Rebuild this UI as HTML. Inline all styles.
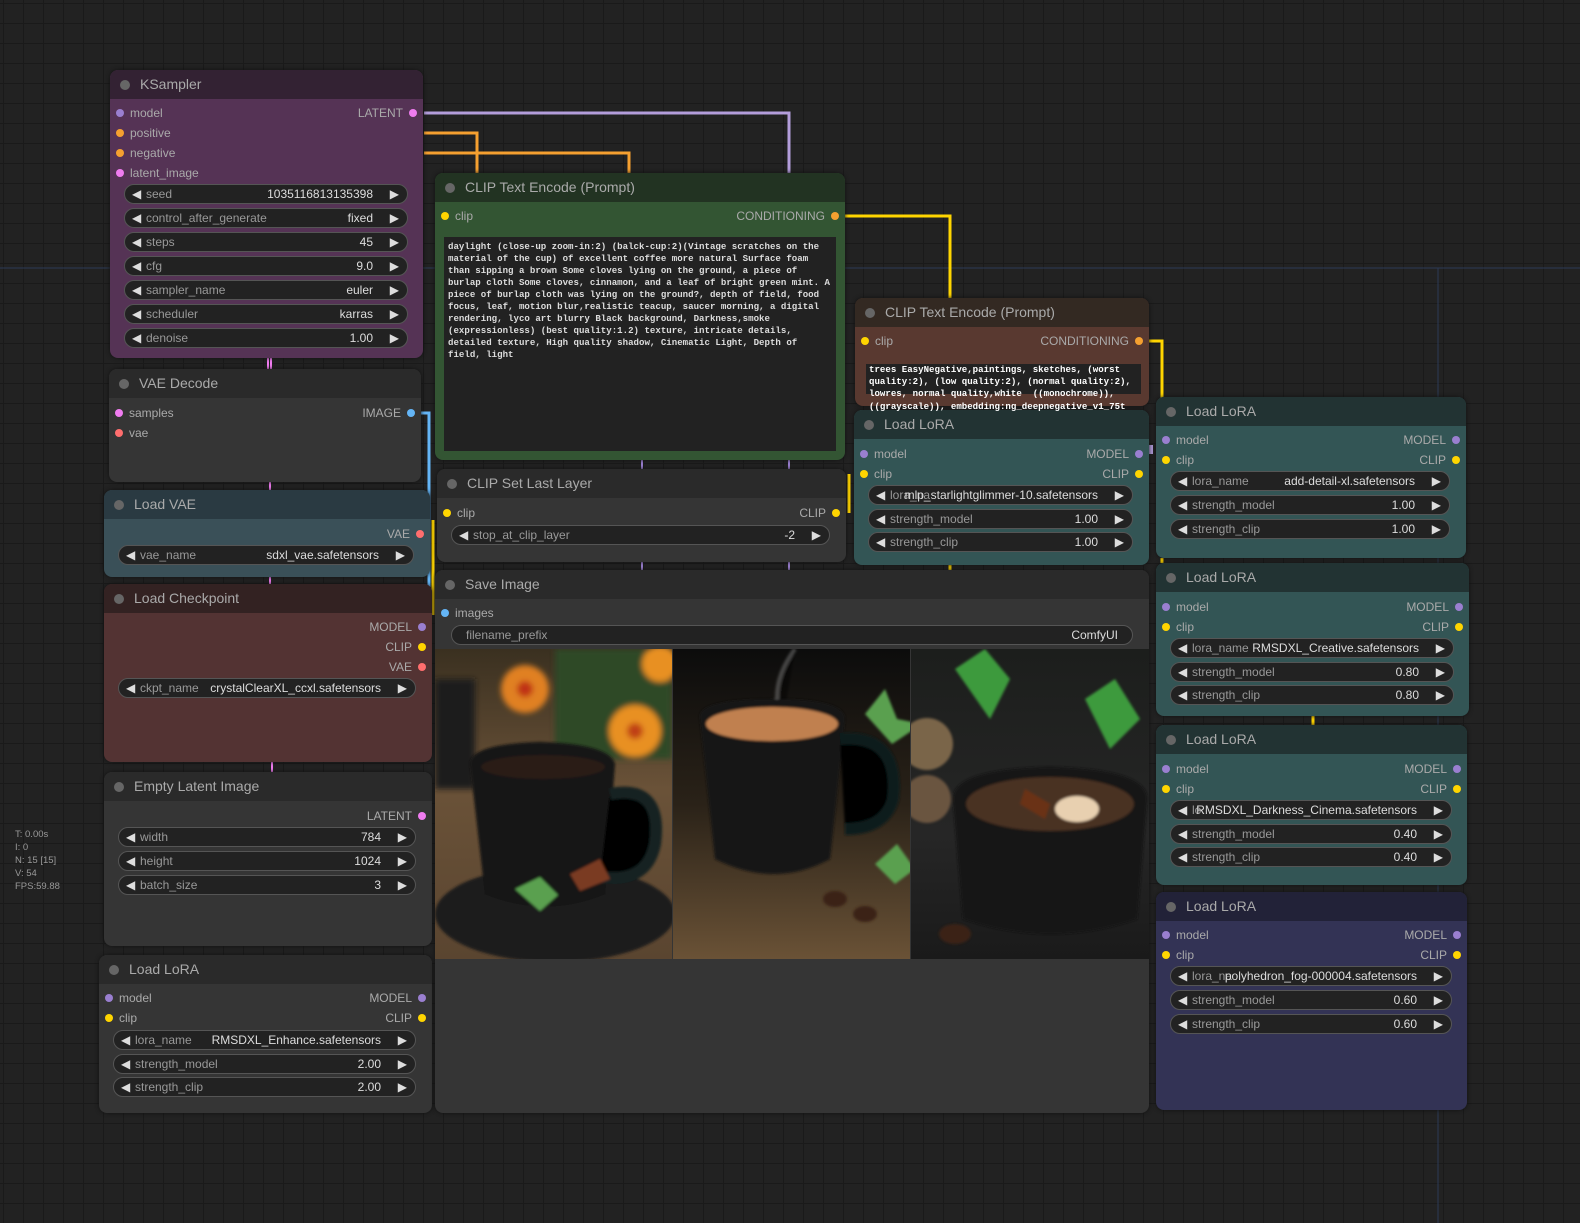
<!DOCTYPE html><html><head><meta charset="utf-8"><style>
*{box-sizing:border-box;margin:0;padding:0}
body{width:1580px;height:1223px;background:#222;position:relative;overflow:hidden;font-family:"Liberation Sans",sans-serif;font-size:12px;color:#aaa;
background-image:linear-gradient(#1a1a1a 1px,transparent 1px),linear-gradient(90deg,#1a1a1a 1px,transparent 1px);background-size:20px 20px;background-position:3px 3px}
.n{position:absolute;border-radius:8px;overflow:hidden;box-shadow:0 0 4px #111}
.t{position:absolute;left:0;right:0;top:0;height:29px;font-size:14px;color:#aaa;line-height:29px;padding-left:30px}
.t:before{content:"";position:absolute;left:10px;top:10px;width:10px;height:10px;border-radius:5px;background:#666}
.r{position:absolute;left:0;right:0;height:16px;line-height:16px}
.r .l{position:absolute;left:20px}.r .o{position:absolute;right:20px}
.d{position:absolute;width:8px;height:8px;border-radius:4px;top:4px}
.di{left:6px}.do{right:6px}
.w{position:absolute;height:20px;border-radius:10px;background:#222;border:1px solid #555;line-height:18px;color:#999}
.w:before{content:"◀";position:absolute;left:7px;color:#ddd;font-size:12px}
.w:after{content:"▶";position:absolute;right:8px;color:#ddd;font-size:12px}
.w.na:before,.w.na:after{content:none}
.w .k{position:absolute;left:21px}.w .v{position:absolute;right:34px;color:#ddd}
.pu{background:#9a7fd0}.or{background:#f5a030}.pk{background:#f07cf0}.ye{background:#ffd500}.bl{background:#64b5f6}.rd{background:#ff6e6e}
.ta{position:absolute;background:#222;font-family:"Liberation Mono",monospace;font-weight:bold;font-size:9.1px;line-height:12px;color:#ddd;padding:3px 4px;white-space:pre}
.st{position:absolute;left:15px;top:828px;font-size:9.5px;line-height:13px;color:#999}
</style></head><body>
<svg width="1580" height="1223" style="position:absolute;left:0;top:0" fill="none">
<path d="M0 268H1580" stroke="#2c3a55" stroke-width="1"/>
<path d="M1438 268V1223" stroke="#2c3a55" stroke-width="1"/>
<path d="M424 113H789V175" stroke="#b39ddb" stroke-width="3"/>
<path d="M424 133H477V175" stroke="#f5a030" stroke-width="3"/>
<path d="M424 153H629V175" stroke="#f5a030" stroke-width="3"/>
<path d="M845 216H950V300" stroke="#ffd500" stroke-width="3"/>
<path d="M1149 341H1162V400" stroke="#ffd500" stroke-width="3"/>
<path d="M421 413H429V615" stroke="#64b5f6" stroke-width="3"/>
<path d="M433 520V615" stroke="#ffd500" stroke-width="3"/>
<path d="M849 474V513" stroke="#ffd500" stroke-width="3"/>
<path d="M1151 454V445" stroke="#b39ddb" stroke-width="4"/>
<path d="M268 358V370M271 358V370" stroke="#f07cf0" stroke-width="2"/>
<path d="M270 480V490M270 577V584M272 762V772" stroke="#f07cf0" stroke-width="2"/>
<path d="M642 460V470M789 460V470M642 562V570M789 562V570" stroke="#9a7fd0" stroke-width="2"/>
<path d="M950 565V572M1313 716V725M1162 558V563" stroke="#ffd500" stroke-width="3"/>
</svg>

<div class="n" style="left:110px;top:70px;width:313px;height:288px;background:#553355">
<div class="t" style="background:#332233">KSampler</div>
<div class="r" style="top:35px"><span class="d di pu"></span><span class="l">model</span><span class="o">LATENT</span><span class="d do pk"></span></div>
<div class="r" style="top:55px"><span class="d di or"></span><span class="l">positive</span></div>
<div class="r" style="top:75px"><span class="d di or"></span><span class="l">negative</span></div>
<div class="r" style="top:95px"><span class="d di pk"></span><span class="l">latent_image</span></div>
<div class="w" style="left:14px;width:284px;top:114px"><span class="k">seed</span><span class="v">1035116813135398</span></div>
<div class="w" style="left:14px;width:284px;top:138px"><span class="k">control_after_generate</span><span class="v">fixed</span></div>
<div class="w" style="left:14px;width:284px;top:162px"><span class="k">steps</span><span class="v">45</span></div>
<div class="w" style="left:14px;width:284px;top:186px"><span class="k">cfg</span><span class="v">9.0</span></div>
<div class="w" style="left:14px;width:284px;top:210px"><span class="k">sampler_name</span><span class="v">euler</span></div>
<div class="w" style="left:14px;width:284px;top:234px"><span class="k">scheduler</span><span class="v">karras</span></div>
<div class="w" style="left:14px;width:284px;top:258px"><span class="k">denoise</span><span class="v">1.00</span></div>
</div>

<div class="n" style="left:109px;top:369px;width:312px;height:113px;background:#353535">
<div class="t" style="background:#2a2a2a">VAE Decode</div>
<div class="r" style="top:36px"><span class="d di pk"></span><span class="l">samples</span><span class="o">IMAGE</span><span class="d do bl"></span></div>
<div class="r" style="top:56px"><span class="d di rd"></span><span class="l">vae</span></div>
</div>

<div class="n" style="left:104px;top:490px;width:326px;height:87px;background:#3a5058">
<div class="t" style="background:#2a3a42">Load VAE</div>
<div class="r" style="top:36px"><span class="o">VAE</span><span class="d do rd"></span></div>
<div class="w" style="left:14px;width:296px;top:55px"><span class="k">vae_name</span><span class="v">sdxl_vae.safetensors</span></div>
</div>

<div class="n" style="left:104px;top:584px;width:328px;height:178px;background:#533333">
<div class="t" style="background:#332222">Load Checkpoint</div>
<div class="r" style="top:35px"><span class="o">MODEL</span><span class="d do pu"></span></div>
<div class="r" style="top:55px"><span class="o">CLIP</span><span class="d do ye"></span></div>
<div class="r" style="top:75px"><span class="o">VAE</span><span class="d do rd"></span></div>
<div class="w" style="left:14px;width:298px;top:94px"><span class="k">ckpt_name</span><span class="v">crystalClearXL_ccxl.safetensors</span></div>
</div>

<div class="n" style="left:104px;top:772px;width:328px;height:174px;background:#353535">
<div class="t" style="background:#2a2a2a">Empty Latent Image</div>
<div class="r" style="top:36px"><span class="o">LATENT</span><span class="d do pk"></span></div>
<div class="w" style="left:14px;width:298px;top:55px"><span class="k">width</span><span class="v">784</span></div>
<div class="w" style="left:14px;width:298px;top:79px"><span class="k">height</span><span class="v">1024</span></div>
<div class="w" style="left:14px;width:298px;top:103px"><span class="k">batch_size</span><span class="v">3</span></div>
</div>

<div class="n" style="left:99px;top:955px;width:333px;height:158px;background:#353535">
<div class="t" style="background:#2a2a2a">Load LoRA</div>
<div class="r" style="top:35px"><span class="d di pu"></span><span class="l">model</span><span class="o">MODEL</span><span class="d do pu"></span></div>
<div class="r" style="top:55px"><span class="d di ye"></span><span class="l">clip</span><span class="o">CLIP</span><span class="d do ye"></span></div>
<div class="w" style="left:14px;width:303px;top:75px"><span class="k">lora_name</span><span class="v">RMSDXL_Enhance.safetensors</span></div>
<div class="w" style="left:14px;width:303px;top:99px"><span class="k">strength_model</span><span class="v">2.00</span></div>
<div class="w" style="left:14px;width:303px;top:122px"><span class="k">strength_clip</span><span class="v">2.00</span></div>
</div>

<div class="n" style="left:435px;top:173px;width:410px;height:287px;background:#335533">
<div class="t" style="background:#223322">CLIP Text Encode (Prompt)</div>
<div class="r" style="top:35px"><span class="d di ye"></span><span class="l">clip</span><span class="o">CONDITIONING</span><span class="d do or"></span></div>
<div class="ta" style="left:9px;top:64px;width:392px;height:214px;padding:4px 4px">daylight (close-up zoom-in:2) (balck-cup:2)(Vintage scratches on the
material of the cup) of excellent coffee more natural Surface foam
than sipping a brown Some cloves lying on the ground, a piece of
burlap cloth Some cloves, cinnamon, and a leaf of bright green mint. A
piece of burlap cloth was lying on the ground?, depth of field, food
focus, leaf, motion blur,realistic teacup, saucer morning, a digital
rendering, lyco art blurry Black background, Darkness,smoke
(expressionless) (best quality:1.2) texture, intricate details,
detailed texture, High quality shadow, Cinematic Light, Depth of
field, light</div>
</div>

<div class="n" style="left:437px;top:469px;width:409px;height:93px;background:#353535">
<div class="t" style="background:#2a2a2a">CLIP Set Last Layer</div>
<div class="r" style="top:36px"><span class="d di ye"></span><span class="l">clip</span><span class="o">CLIP</span><span class="d do ye"></span></div>
<div class="w" style="left:14px;width:379px;top:56px"><span class="k">stop_at_clip_layer</span><span class="v">-2</span></div>
</div>

<div class="n" style="left:435px;top:570px;width:714px;height:543px;background:#353535">
<div class="t" style="background:#2a2a2a">Save Image</div>
<div class="r" style="top:35px"><span class="d di bl"></span><span class="l">images</span></div>
<div class="w na" style="left:16px;width:682px;top:55px"><span class="k" style="left:14px">filename_prefix</span><span class="v" style="right:14px">ComfyUI</span></div>
<svg style="position:absolute;left:0;top:79px" width="714" height="310">
<defs>
<linearGradient id="g1" x1="0" y1="0" x2="0" y2="1"><stop offset="0" stop-color="#3a3020"/><stop offset=".45" stop-color="#6a5238"/><stop offset="1" stop-color="#5a4530"/></linearGradient>
<linearGradient id="g2" x1="0" y1="0" x2="0" y2="1"><stop offset="0" stop-color="#0c0c0c"/><stop offset=".5" stop-color="#2a2218"/><stop offset="1" stop-color="#6a5236"/></linearGradient>
<linearGradient id="g3" x1="0" y1="0" x2="0" y2="1"><stop offset="0" stop-color="#1c1e1c"/><stop offset=".6" stop-color="#262626"/><stop offset="1" stop-color="#1a1a1a"/></linearGradient>
<filter id="b"><feGaussianBlur stdDeviation="3"/></filter>
<filter id="b2"><feGaussianBlur stdDeviation="1.2"/></filter>
<clipPath id="c1"><rect x="0" y="0" width="237" height="310"/></clipPath>
<clipPath id="c2"><rect x="238" y="0" width="237" height="310"/></clipPath>
<clipPath id="c3"><rect x="476" y="0" width="238" height="310"/></clipPath>
</defs>
<g clip-path="url(#c1)">
<rect x="0" y="0" width="237" height="310" fill="url(#g1)"/>
<g filter="url(#b)">
<rect x="120" y="0" width="117" height="110" fill="#2f4a28"/>
<circle cx="90" cy="40" r="24" fill="#e08020"/><circle cx="90" cy="40" r="8" fill="#c03018"/>
<circle cx="200" cy="82" r="26" fill="#e89020"/><circle cx="200" cy="82" r="8" fill="#c04018"/>
<circle cx="225" cy="15" r="18" fill="#e89020"/>
<rect x="0" y="30" width="40" height="110" fill="#1a1a1a"/>
</g>
<g filter="url(#b2)">
<ellipse cx="120" cy="265" rx="120" ry="48" fill="#1a1a1a"/>
<path d="M35 115Q35 95 105 93Q175 95 180 115L170 245Q110 270 50 245Z" fill="#121212"/>
<path d="M175 145Q228 135 220 195Q212 235 165 228" stroke="#122020" stroke-width="12"/>
<ellipse cx="108" cy="118" rx="62" ry="12" fill="#2a1a12"/>
<path d="M80 240l25 -12l18 18l-18 16z" fill="#5aa050"/>
<path d="M135 225l30 -15l10 20l-30 12z" fill="#7a3a20"/>
</g>
</g>
<g clip-path="url(#c2)">
<rect x="238" y="0" width="237" height="310" fill="url(#g2)"/>
<g filter="url(#b2)">
<path d="M360 0Q330 40 350 80Q360 100 340 120" stroke="#888" stroke-width="4" opacity=".45"/>
<path d="M430 65l20 -25l12 30l25 5l-30 20z" fill="#5aa050"/>
<path d="M265 70Q260 50 340 50Q410 50 410 70L395 210Q340 240 280 210Z" fill="#141414"/>
<ellipse cx="337" cy="75" rx="66" ry="17" fill="#c08050"/>
<path d="M405 90Q465 85 458 150Q450 180 410 180" stroke="#101a1a" stroke-width="12"/>
<path d="M440 215l22 -20l18 25l-20 15z" fill="#5aa050"/>
<ellipse cx="400" cy="250" rx="12" ry="8" fill="#3a2418"/><ellipse cx="430" cy="265" rx="12" ry="8" fill="#3a2418"/>
</g>
</g>
<g clip-path="url(#c3)">
<rect x="476" y="0" width="238" height="310" fill="url(#g3)"/>
<g filter="url(#b2)">
<path d="M520 20l30 -20l25 30l-20 40z M650 50l30 -20l25 40l-30 30z" fill="#3c9a3c"/>
<circle cx="492" cy="95" r="26" fill="#7a6548"/><circle cx="492" cy="150" r="24" fill="#6a5540"/>
<path d="M518 150Q518 120 615 118Q712 120 712 150L702 270Q615 300 528 270Z" fill="#121212"/>
<ellipse cx="615" cy="155" rx="84" ry="27" fill="#4a3222"/>
<ellipse cx="642" cy="160" rx="22" ry="13" fill="#e8d0b0"/>
<path d="M590 140l25 15l-5 15l-25 -15z" fill="#6a3018"/>
<ellipse cx="520" cy="285" rx="16" ry="10" fill="#3a2418"/>
</g>
</g>
</svg>
</div>

<div class="n" style="left:855px;top:298px;width:294px;height:108px;background:#593930;overflow:visible">
<div class="t" style="background:#332922;border-radius:8px 8px 0 0">CLIP Text Encode (Prompt)</div>
<div class="r" style="top:35px"><span class="d di ye"></span><span class="l">clip</span><span class="o">CONDITIONING</span><span class="d do or"></span></div>
<div class="ta" style="left:11px;top:66px;width:275px;height:30px;padding:0 3px;color:#fff">trees EasyNegative,paintings, sketches, (worst
quality:2), (low quality:2), (normal quality:2),
lowres, normal quality,white  ((monochrome)),</div>
</div>

<div class="n" style="left:854px;top:410px;width:295px;height:155px;background:#335555">
<div class="t" style="background:#223333">Load LoRA</div>
<div class="r" style="top:36px"><span class="d di pu"></span><span class="l">model</span><span class="o">MODEL</span><span class="d do pu"></span></div>
<div class="r" style="top:56px"><span class="d di ye"></span><span class="l">clip</span><span class="o">CLIP</span><span class="d do ye"></span></div>
<div class="w" style="left:14px;width:265px;top:75px"><span class="k">lora_na</span><span class="v" style="right:34px">mlp_starlightglimmer-10.safetensors</span></div>
<div class="w" style="left:14px;width:265px;top:99px"><span class="k">strength_model</span><span class="v">1.00</span></div>
<div class="w" style="left:14px;width:265px;top:122px"><span class="k">strength_clip</span><span class="v">1.00</span></div>
</div>
<div class="ta" style="left:866px;top:401px;padding:0 3px;background:transparent;color:#fff">((grayscale)), embedding:ng_deepnegative_v1_75t</div>

<div class="n" style="left:1156px;top:397px;width:310px;height:161px;background:#335555">
<div class="t" style="background:#223333">Load LoRA</div>
<div class="r" style="top:35px"><span class="d di pu"></span><span class="l">model</span><span class="o">MODEL</span><span class="d do pu"></span></div>
<div class="r" style="top:55px"><span class="d di ye"></span><span class="l">clip</span><span class="o">CLIP</span><span class="d do ye"></span></div>
<div class="w" style="left:14px;width:280px;top:74px"><span class="k">lora_name</span><span class="v">add-detail-xl.safetensors</span></div>
<div class="w" style="left:14px;width:280px;top:98px"><span class="k">strength_model</span><span class="v">1.00</span></div>
<div class="w" style="left:14px;width:280px;top:122px"><span class="k">strength_clip</span><span class="v">1.00</span></div>
</div>
<div class="n" style="left:1156px;top:563px;width:313px;height:153px;background:#335555">
<div class="t" style="background:#223333">Load LoRA</div>
<div class="r" style="top:36px"><span class="d di pu"></span><span class="l">model</span><span class="o">MODEL</span><span class="d do pu"></span></div>
<div class="r" style="top:56px"><span class="d di ye"></span><span class="l">clip</span><span class="o">CLIP</span><span class="d do ye"></span></div>
<div class="w" style="left:14px;width:284px;top:75px"><span class="k">lora_name</span><span class="v">RMSDXL_Creative.safetensors</span></div>
<div class="w" style="left:14px;width:284px;top:99px"><span class="k">strength_model</span><span class="v">0.80</span></div>
<div class="w" style="left:14px;width:284px;top:122px"><span class="k">strength_clip</span><span class="v">0.80</span></div>
</div>
<div class="n" style="left:1156px;top:725px;width:311px;height:160px;background:#335555">
<div class="t" style="background:#223333">Load LoRA</div>
<div class="r" style="top:36px"><span class="d di pu"></span><span class="l">model</span><span class="o">MODEL</span><span class="d do pu"></span></div>
<div class="r" style="top:56px"><span class="d di ye"></span><span class="l">clip</span><span class="o">CLIP</span><span class="d do ye"></span></div>
<div class="w" style="left:14px;width:282px;top:75px"><span class="k">lo</span><span class="v">RMSDXL_Darkness_Cinema.safetensors</span></div>
<div class="w" style="left:14px;width:282px;top:99px"><span class="k">strength_model</span><span class="v">0.40</span></div>
<div class="w" style="left:14px;width:282px;top:122px"><span class="k">strength_clip</span><span class="v">0.40</span></div>
</div>
<div class="n" style="left:1156px;top:892px;width:311px;height:218px;background:#333355">
<div class="t" style="background:#222238">Load LoRA</div>
<div class="r" style="top:35px"><span class="d di pu"></span><span class="l">model</span><span class="o">MODEL</span><span class="d do pu"></span></div>
<div class="r" style="top:55px"><span class="d di ye"></span><span class="l">clip</span><span class="o">CLIP</span><span class="d do ye"></span></div>
<div class="w" style="left:14px;width:282px;top:74px"><span class="k">lora_na</span><span class="v">polyhedron_fog-000004.safetensors</span></div>
<div class="w" style="left:14px;width:282px;top:98px"><span class="k">strength_model</span><span class="v">0.60</span></div>
<div class="w" style="left:14px;width:282px;top:122px"><span class="k">strength_clip</span><span class="v">0.60</span></div>
</div>

<div class="st">T: 0.00s<br>I: 0<br>N: 15 [15]<br>V: 54<br>FPS:59.88</div>
</body></html>
